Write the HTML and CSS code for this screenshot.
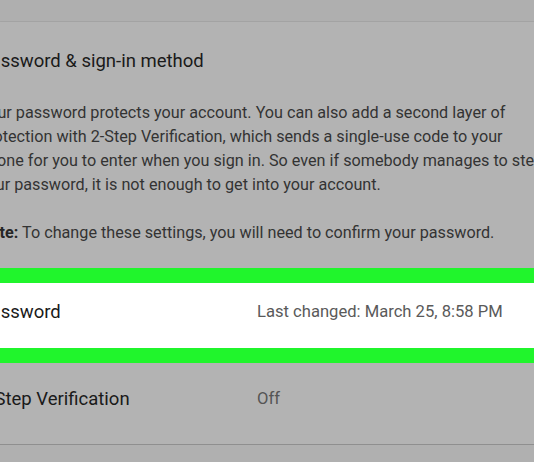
FILE: index.html
```html
<!DOCTYPE html>
<html>
<head>
<meta charset="utf-8">
<link rel="stylesheet" href="styles.css">
</head>
<body>
<div class="topbar"></div>
<div class="card">
  <div class="intro">
    <h2 class="title">Password &amp; sign-in method</h2>
    <p class="desc">Your password protects your account. You can also add a second layer of<br>protection with 2-Step Verification, which sends a single-use code to your<br>phone for you to enter when you sign in. So even if somebody manages to steal<br>your password, it is not enough to get into your account.</p>
    <p class="note"><b>Note:</b> To change these settings, you will need to confirm your password.</p>
  </div>
  <div class="row highlight">
    <span class="label">Password</span>
    <span class="value">Last changed: March 25, 8:58 PM</span>
  </div>
  <div class="row last">
    <span class="label">2-Step Verification</span>
    <span class="value">Off</span>
  </div>
</div>
<div class="below"></div>
</body>
</html>
```

FILE: styles.css
```css
html, body {
  margin: 0;
  padding: 0;
  background: #b2b2b2;
  font-family: Roboto, "Liberation Sans", sans-serif;
  overflow: hidden;
  width: 534px;
  height: 462px;
}
.topbar {
  height: 21px;
  background: #afafaf;
  border-bottom: 1px solid #a6a6a6;
}
.card {
  background: #b3b3b3;
  border-bottom: 1px solid #8f8f8f;
  box-shadow: 0 1px 2px rgba(0,0,0,0.25);
}
.intro {
  padding: 27px 0 23px 0;
  margin-left: -21px;
  width: 620px;
  white-space: nowrap;
}
.title {
  margin: 0;
  font-size: 18.5px;
  font-weight: 400;
  line-height: 24px;
  color: #1a1a1a;
}
.desc {
  margin: 28px 0 0 0;
  font-size: 16.2px;
  line-height: 24px;
  color: #333333;
}
.note {
  margin: 24px 0 0 0;
  font-size: 16.2px;
  line-height: 24px;
  color: #333333;
}
.note b {
  font-weight: 700;
  color: #262626;
}
.row {
  display: flex;
  align-items: center;
  margin-left: -21px;
}
.row .label {
  width: 278px;
  font-size: 18.5px;
  color: #1a1a1a;
}
.row .value {
  font-size: 16.6px;
  color: #4a4a4a;
}
.highlight {
  background: #ffffff;
  border-top: 15px solid #20f52c;
  border-bottom: 15px solid #20f52c;
  padding-bottom: 8px;
  height: 57px;
}
.highlight .value {
  color: #5a5a5a;
}
.last {
  height: 81px;
  padding-bottom: 10px;
  box-sizing: border-box;
}
.last .value {
  color: #555555;
}
.below {
  height: 20px;
  background: #b0b0b0;
}
```
